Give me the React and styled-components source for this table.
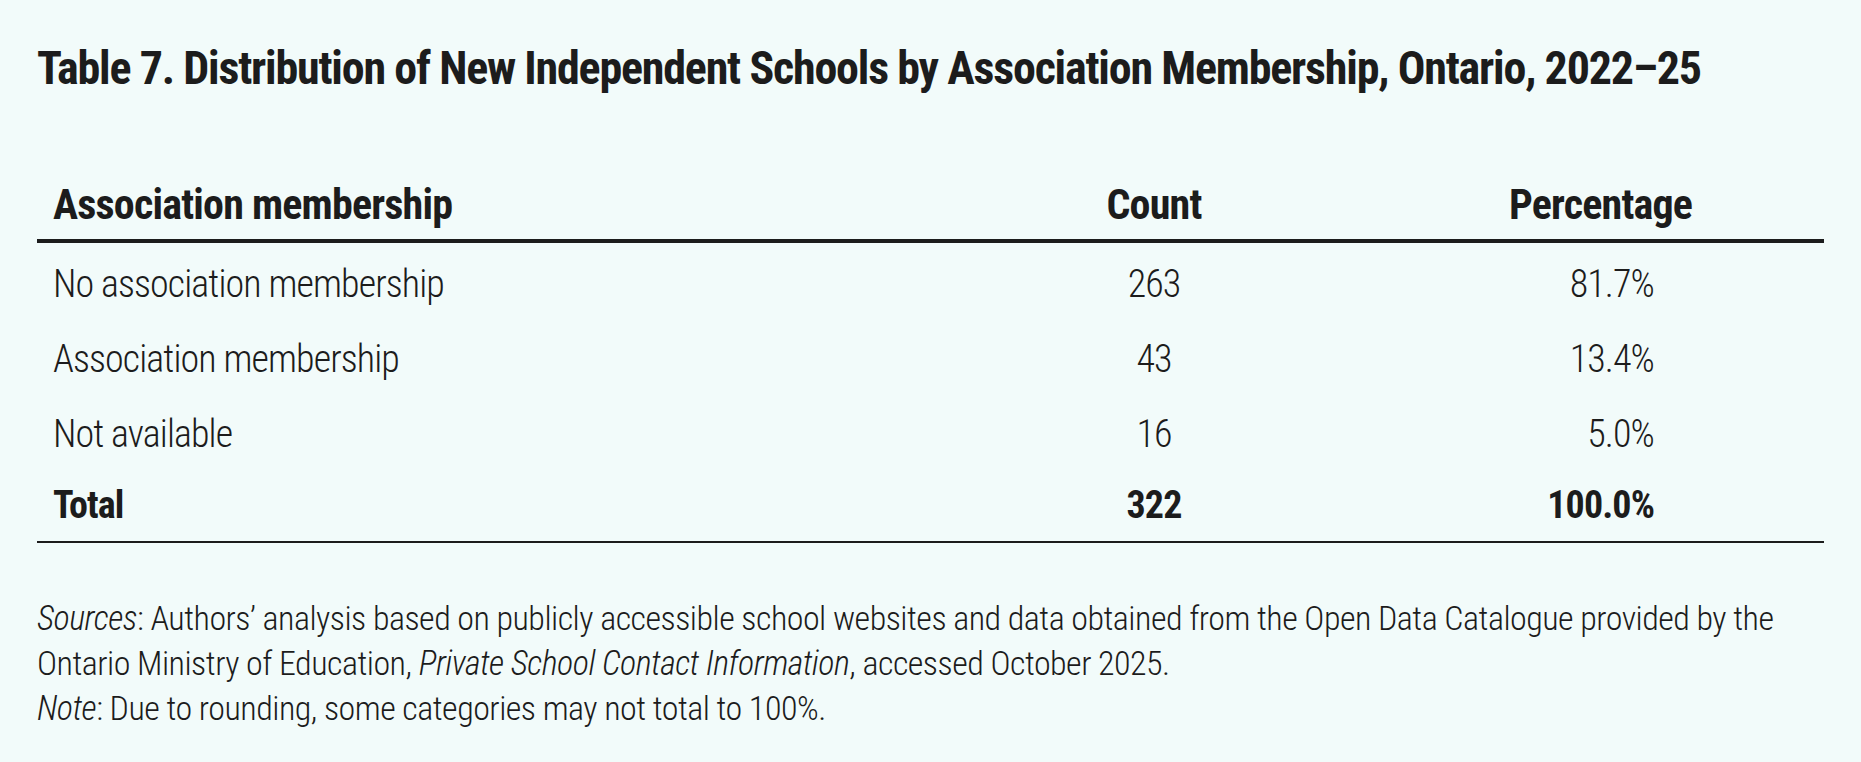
import React from "react";
import styled, { createGlobalStyle } from "styled-components";

const GlobalStyle = createGlobalStyle`
  html, body {
    margin: 0;
    padding: 0;
    background: #f2fbfa;
  }
  body {
    font-family: Roboto, "Noto Sans", sans-serif;
    font-stretch: 83%;
    color: #1c1c1c;
  }
`;

const Page = styled.main`
  padding: 40px 37px 30px;
  box-sizing: border-box;
  min-height: 762px;
`;

const Title = styled.h1`
  margin: 0;
  font-size: 46px;
  line-height: 56px;
  font-weight: 700;
  font-stretch: 83%;
  letter-spacing: -1.2px;
  white-space: nowrap;
`;

const Table = styled.table`
  width: 100%;
  margin-top: 84px;
  border-collapse: collapse;
  table-layout: fixed;
`;

const HeadCell = styled.th`
  padding: 0 16px 9px;
  font-size: 42px;
  line-height: 50px;
  font-weight: 700;
  font-stretch: 84%;
  letter-spacing: -0.8px;
  text-align: ${(p) => p.$align || "left"};
  border-bottom: 4px solid #1c1c1c;
`;

const Row = styled.tr`
  &:last-child td {
    padding-top: 15px;
    padding-bottom: 14px;
    font-weight: 700;
    border-bottom: 2px solid #1c1c1c;
  }
`;

const Cell = styled.td`
  padding: 19px 16px 12px;
  padding-right: ${(p) => (p.$align === "right" ? "170px" : "16px")};
  font-size: 38px;
  line-height: 44px;
  font-weight: 350;
  font-stretch: 83%;
  letter-spacing: -0.9px;
  text-align: ${(p) => p.$align || "left"};
`;

const Notes = styled.div`
  margin-top: 53px;
  font-size: 34px;
  line-height: 45px;
  font-weight: 350;
  font-stretch: 83%;
  letter-spacing: -0.52px;
`;

const NoteLine = styled.p`
  margin: 0;
`;

const rows = [
  ["No association membership", "263", "81.7%"],
  ["Association membership", "43", "13.4%"],
  ["Not available", "16", "5.0%"],
  ["Total", "322", "100.0%"],
];

export default function App() {
  return (
    <>
      <GlobalStyle />
      <Page>
        <Title>
          Table 7. Distribution of New Independent Schools by Association
          Membership, Ontario, 2022–25
        </Title>
        <Table>
          <colgroup>
            <col style={{ width: "894px" }} />
            <col style={{ width: "446px" }} />
            <col />
          </colgroup>
          <thead>
            <tr>
              <HeadCell>Association membership</HeadCell>
              <HeadCell $align="center">Count</HeadCell>
              <HeadCell $align="center">Percentage</HeadCell>
            </tr>
          </thead>
          <tbody>
            {rows.map(([label, count, pct]) => (
              <Row key={label}>
                <Cell>{label}</Cell>
                <Cell $align="center">{count}</Cell>
                <Cell $align="right">{pct}</Cell>
              </Row>
            ))}
          </tbody>
        </Table>
        <Notes>
          <NoteLine>
            <em>Sources</em>: Authors’ analysis based on publicly accessible
            school websites and data obtained from the Open Data Catalogue
            provided by the
            <br />
            Ontario Ministry of Education, <em>Private School Contact Information</em>, accessed October 2025.
          </NoteLine>
          <NoteLine>
            <em>Note</em>: Due to rounding, some categories may not total to 100%.
          </NoteLine>
        </Notes>
      </Page>
    </>
  );
}
